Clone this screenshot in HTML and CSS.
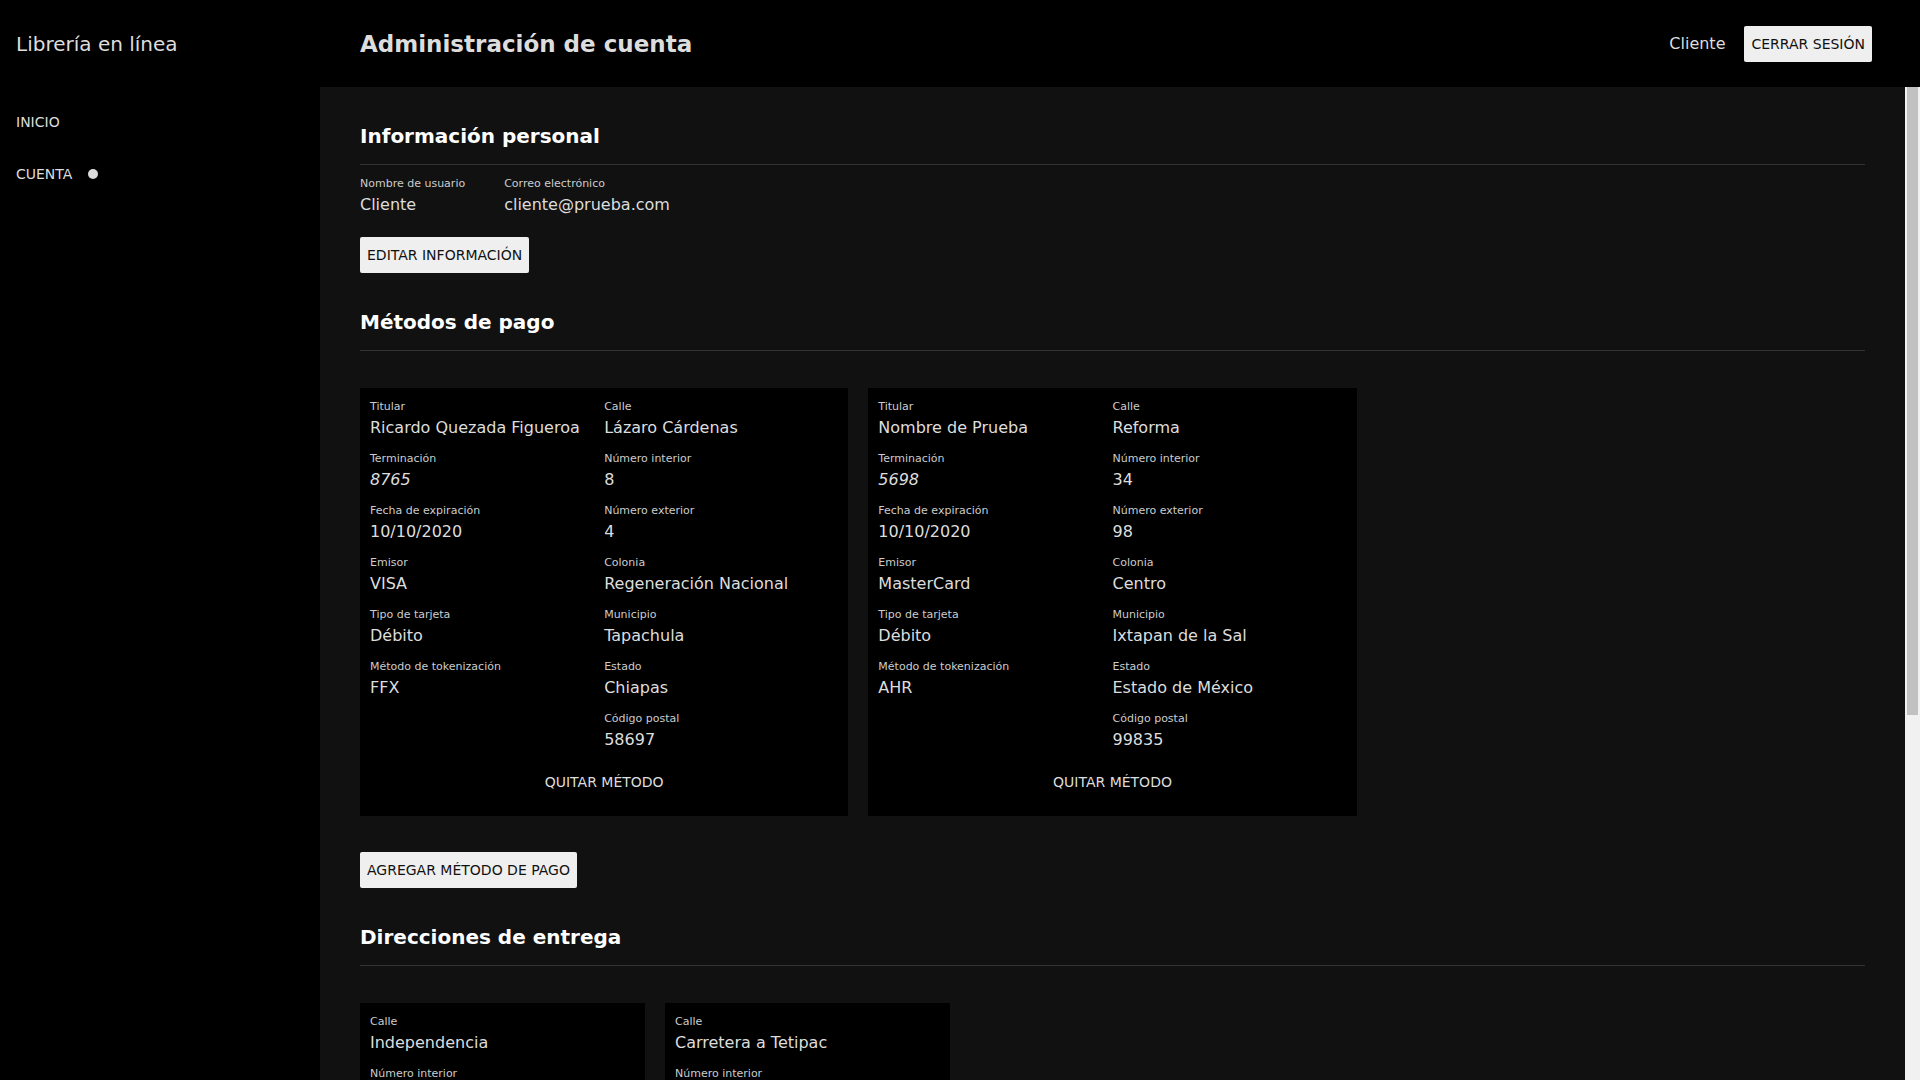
FILE: index.html
```html
<!DOCTYPE html>
<html lang="es">
<head>
<meta charset="utf-8">
<title>Administración de cuenta</title>
<link rel="stylesheet" href="styles.css">
</head>
<body>
<header class="topbar">
  <div class="brand">Librería en línea</div>
  <h1 class="page-title">Administración de cuenta</h1>
  <div class="user-area">
    <span class="user-name">Cliente</span>
    <button class="btn">CERRAR SESIÓN</button>
  </div>
</header>
<div class="layout">
  <nav class="sidebar">
    <ul class="nav">
      <li class="nav-item">INICIO</li>
      <li class="nav-item active">CUENTA<span class="dot"></span></li>
    </ul>
  </nav>
  <main class="content">
    <section class="section">
      <h2 class="section-title">Información personal</h2>
      <div class="info-row">
        <div class="field"><div class="label">Nombre de usuario</div><div class="value">Cliente</div></div>
        <div class="field"><div class="label">Correo electrónico</div><div class="value">cliente@prueba.com</div></div>
      </div>
      <button class="btn btn-info">EDITAR INFORMACIÓN</button>
    </section>

    <section class="section">
      <h2 class="section-title">Métodos de pago</h2>
      <div class="cards cards-3">
        <div class="card">
          <div class="card-cols">
            <div class="col">
              <div class="field"><div class="label">Titular</div><div class="value">Ricardo Quezada Figueroa</div></div>
              <div class="field"><div class="label">Terminación</div><div class="value italic">8765</div></div>
              <div class="field"><div class="label">Fecha de expiración</div><div class="value">10/10/2020</div></div>
              <div class="field"><div class="label">Emisor</div><div class="value">VISA</div></div>
              <div class="field"><div class="label">Tipo de tarjeta</div><div class="value">Débito</div></div>
              <div class="field"><div class="label">Método de tokenización</div><div class="value">FFX</div></div>
            </div>
            <div class="col">
              <div class="field"><div class="label">Calle</div><div class="value">Lázaro Cárdenas</div></div>
              <div class="field"><div class="label">Número interior</div><div class="value">8</div></div>
              <div class="field"><div class="label">Número exterior</div><div class="value">4</div></div>
              <div class="field"><div class="label">Colonia</div><div class="value">Regeneración Nacional</div></div>
              <div class="field"><div class="label">Municipio</div><div class="value">Tapachula</div></div>
              <div class="field"><div class="label">Estado</div><div class="value">Chiapas</div></div>
              <div class="field"><div class="label">Código postal</div><div class="value">58697</div></div>
            </div>
          </div>
          <button class="card-action">QUITAR MÉTODO</button>
        </div>
        <div class="card">
          <div class="card-cols">
            <div class="col">
              <div class="field"><div class="label">Titular</div><div class="value">Nombre de Prueba</div></div>
              <div class="field"><div class="label">Terminación</div><div class="value italic">5698</div></div>
              <div class="field"><div class="label">Fecha de expiración</div><div class="value">10/10/2020</div></div>
              <div class="field"><div class="label">Emisor</div><div class="value">MasterCard</div></div>
              <div class="field"><div class="label">Tipo de tarjeta</div><div class="value">Débito</div></div>
              <div class="field"><div class="label">Método de tokenización</div><div class="value">AHR</div></div>
            </div>
            <div class="col">
              <div class="field"><div class="label">Calle</div><div class="value">Reforma</div></div>
              <div class="field"><div class="label">Número interior</div><div class="value">34</div></div>
              <div class="field"><div class="label">Número exterior</div><div class="value">98</div></div>
              <div class="field"><div class="label">Colonia</div><div class="value">Centro</div></div>
              <div class="field"><div class="label">Municipio</div><div class="value">Ixtapan de la Sal</div></div>
              <div class="field"><div class="label">Estado</div><div class="value">Estado de México</div></div>
              <div class="field"><div class="label">Código postal</div><div class="value">99835</div></div>
            </div>
          </div>
          <button class="card-action">QUITAR MÉTODO</button>
        </div>
      </div>
      <button class="btn btn-add">AGREGAR MÉTODO DE PAGO</button>
    </section>

    <section class="section">
      <h2 class="section-title">Direcciones de entrega</h2>
      <div class="cards cards-5">
        <div class="card">
          <div class="field"><div class="label">Calle</div><div class="value">Independencia</div></div>
          <div class="field"><div class="label">Número interior</div><div class="value">12</div></div>
          <div class="field"><div class="label">Número exterior</div><div class="value">45</div></div>
          <div class="field"><div class="label">Colonia</div><div class="value">Centro</div></div>
          <div class="field"><div class="label">Municipio</div><div class="value">Tapachula</div></div>
          <div class="field"><div class="label">Estado</div><div class="value">Chiapas</div></div>
          <div class="field"><div class="label">Código postal</div><div class="value">30700</div></div>
          <button class="card-action">QUITAR DIRECCIÓN</button>
        </div>
        <div class="card">
          <div class="field"><div class="label">Calle</div><div class="value">Carretera a Tetipac</div></div>
          <div class="field"><div class="label">Número interior</div><div class="value">3</div></div>
          <div class="field"><div class="label">Número exterior</div><div class="value">17</div></div>
          <div class="field"><div class="label">Colonia</div><div class="value">Los Jales</div></div>
          <div class="field"><div class="label">Municipio</div><div class="value">Taxco de Alarcón</div></div>
          <div class="field"><div class="label">Estado</div><div class="value">Guerrero</div></div>
          <div class="field"><div class="label">Código postal</div><div class="value">40200</div></div>
          <button class="card-action">QUITAR DIRECCIÓN</button>
        </div>
      </div>
      <button class="btn btn-add">AGREGAR DIRECCIÓN</button>
    </section>
  </main>
  <div class="scrollbar" aria-hidden="true"><div class="scroll-thumb"></div></div>
</div>
</body>
</html>
```

FILE: styles.css
```css
html, body {
  margin: 0;
  height: 100%;
}

body {
  font-family: "DejaVu Sans", "Noto Sans", sans-serif;
  background: #111;
  color: #ddd;
  overflow: hidden;
}

.topbar {
  display: flex;
  align-items: center;
  height: 87px;
  background: #000;
  padding-right: 48px;
  box-sizing: border-box;
}

.brand {
  width: 320px;
  flex-shrink: 0;
  padding-left: 16px;
  box-sizing: border-box;
  font-size: 20px;
  color: #ddd;
}

.page-title {
  flex: 1;
  margin: 0;
  padding-left: 40px;
  font-size: 23px;
  font-weight: bold;
  color: #ddd;
}

.user-area {
  display: flex;
  align-items: center;
  gap: 19px;
}

.user-name {
  font-size: 16px;
  color: #ddd;
}

.btn {
  display: block;
  font-family: inherit;
  font-size: 14px;
  line-height: 18px;
  padding: 9px 7px;
  background: #efefef;
  color: #111;
  border: none;
  border-radius: 2px;
  cursor: pointer;
}

.layout {
  display: flex;
  height: calc(100vh - 87px);
}

.sidebar {
  width: 320px;
  flex-shrink: 0;
  background: #000;
}

.nav {
  list-style: none;
  margin: 0;
  padding: 9px 0 0;
}

.nav-item {
  display: flex;
  align-items: center;
  padding: 18px 16px;
  font-size: 14px;
  line-height: 16px;
  color: #ddd;
}

.dot {
  width: 10px;
  height: 10px;
  border-radius: 50%;
  background: #ddd;
  margin-left: 16px;
}

.content {
  flex: 1;
  overflow-y: auto;
  scrollbar-width: none;
  padding: 0 40px 155px;
  background: #111;
}

.content::-webkit-scrollbar {
  display: none;
}

.scrollbar {
  width: 15px;
  flex-shrink: 0;
  background: #f1f1f1;
}

.scroll-thumb {
  height: 628px;
  margin: 0 2px;
  background: #c1c1c1;
}

.section-title {
  margin: 38px 0 12px;
  padding-bottom: 16px;
  border-bottom: 1px solid #333;
  font-size: 20px;
  line-height: 23px;
  font-weight: bold;
  color: #fff;
}

.info-row {
  display: flex;
  gap: 39px;
}

.field {
  margin-bottom: 15px;
}

.label {
  font-size: 11px;
  line-height: 13px;
  margin-bottom: 5px;
  color: #ccc;
}

.value {
  font-size: 16px;
  line-height: 19px;
  color: #ddd;
  white-space: nowrap;
}

.italic {
  font-style: italic;
}

.btn-info {
  margin-top: 8px;
}

.cards {
  display: grid;
  gap: 20px;
  padding-top: 25px;
  margin-bottom: 36px;
  align-items: start;
}

.cards-3 {
  grid-template-columns: repeat(3, 1fr);
}

.cards-5 {
  grid-template-columns: repeat(5, 1fr);
}

.card {
  background: #000;
  padding: 12px 10px 16px;
}

.card-cols {
  display: grid;
  grid-template-columns: 1fr 1fr;
}

.card-action {
  display: block;
  margin: 0 auto;
  padding: 10px;
  background: transparent;
  border: none;
  font-family: inherit;
  font-size: 14px;
  line-height: 16px;
  color: #ddd;
  cursor: pointer;
}
```
